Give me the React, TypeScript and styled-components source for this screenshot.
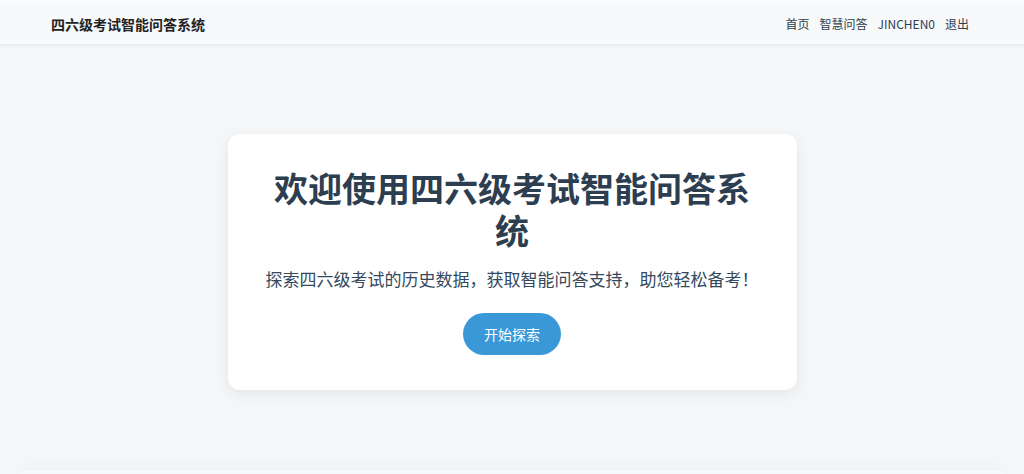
import React from "react";
import styled, { createGlobalStyle } from "styled-components";

const GlobalStyle = createGlobalStyle`
  html, body {
    margin: 0;
    padding: 0;
    background: #f5f6f8;
    font-family: "Noto Sans CJK SC", "Noto Sans", sans-serif;
    color: #2c3e50;
  }
  * {
    box-sizing: border-box;
  }
`;

const Page = styled.div`
  height: 100vh;
  background: #f5f6f8;
  border-top: 3px solid #fafbfc;
  display: flex;
  flex-direction: column;
  overflow: hidden;
`;

const NavBar = styled.header`
  flex: none;
  height: 41px;
  background: #f8f9fb;
  box-shadow: 0 1px 4px rgba(0, 0, 0, 0.08);
  display: flex;
  align-items: center;
  justify-content: space-between;
  padding: 0 55px 0 51px;
  position: relative;
  z-index: 1;
`;

const Brand = styled.div`
  font-size: 14px;
  font-weight: 700;
  color: #222;
`;

const NavLinks = styled.nav`
  display: flex;
  align-items: center;
  gap: 10px;
`;

const NavLink = styled.a`
  font-size: 12px;
  color: #2c3e50;
  text-decoration: none;
  cursor: pointer;
`;

const Main = styled.main`
  flex: 1;
  display: flex;
  justify-content: center;
  align-items: flex-start;
  padding: 90px 20px 0;
`;

const Card = styled.section`
  width: 569px;
  background: #ffffff;
  border-radius: 12px;
  box-shadow: 0 4px 14px rgba(0, 0, 0, 0.07);
  padding: 33px 36px 35px;
  display: flex;
  flex-direction: column;
  align-items: center;
  text-align: center;
`;

const Title = styled.h1`
  margin: 0;
  font-size: 34px;
  line-height: 42px;
  font-weight: 700;
  color: #2c3e50;
`;

const Subtitle = styled.p`
  margin: 14px 0 0;
  font-size: 17px;
  line-height: 27px;
  color: #34495e;
`;

const StartButton = styled.button`
  margin-top: 21px;
  width: 98px;
  height: 42px;
  border: none;
  border-radius: 21px;
  background: #3a98d8;
  color: #ffffff;
  font-family: inherit;
  font-size: 14px;
  cursor: pointer;
`;

const Footer = styled.footer`
  flex: none;
  height: 3px;
  margin: 0 20px;
  background: #f8f9fa;
  box-shadow: 0 -4px 12px rgba(0, 0, 0, 0.06);
`;

export default function App() {
  return (
    <>
      <GlobalStyle />
      <Page>
        <NavBar>
          <Brand>四六级考试智能问答系统</Brand>
          <NavLinks>
            <NavLink>首页</NavLink>
            <NavLink>智慧问答</NavLink>
            <NavLink>JINCHEN0</NavLink>
            <NavLink>退出</NavLink>
          </NavLinks>
        </NavBar>
        <Main>
          <Card>
            <Title>欢迎使用四六级考试智能问答系统</Title>
            <Subtitle>探索四六级考试的历史数据，获取智能问答支持，助您轻松备考！</Subtitle>
            <StartButton>开始探索</StartButton>
          </Card>
        </Main>
        <Footer />
      </Page>
    </>
  );
}
